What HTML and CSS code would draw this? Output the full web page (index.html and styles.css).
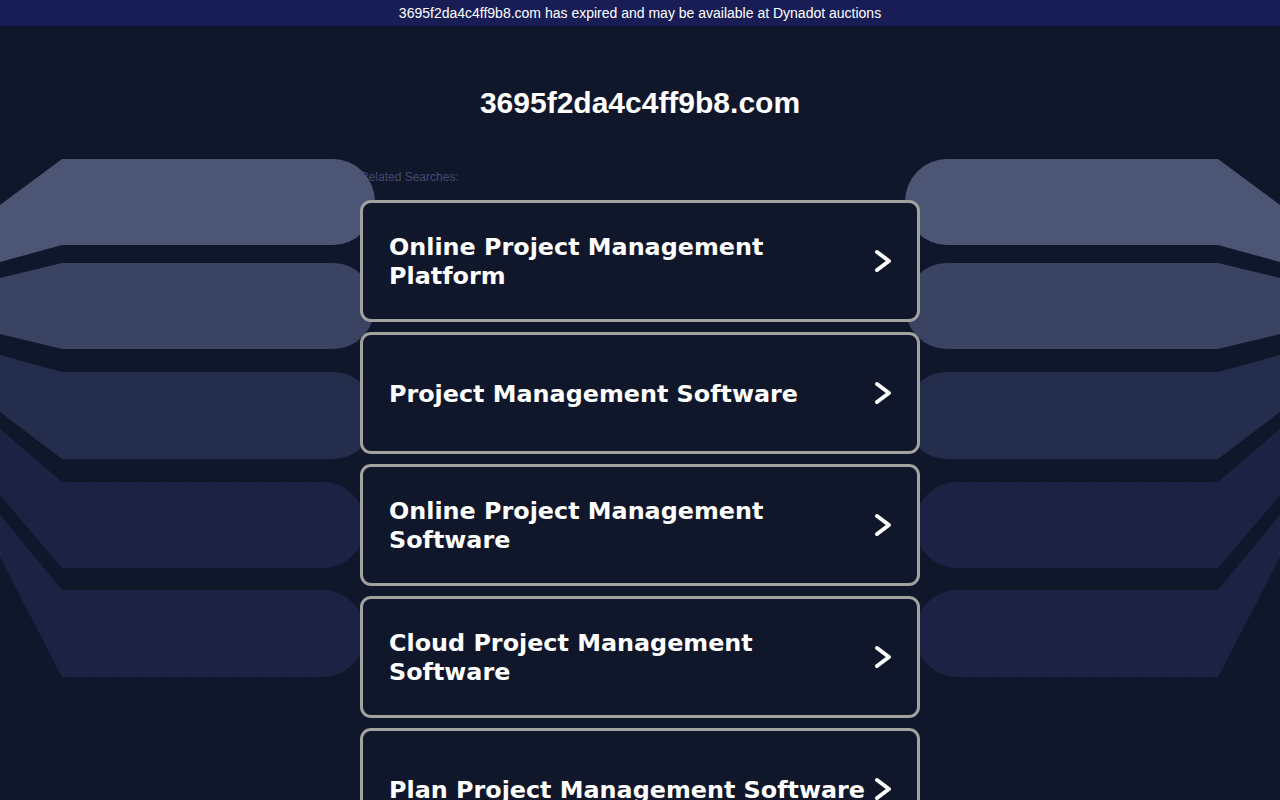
FILE: index.html
```html
<!DOCTYPE html>
<html lang="en">
<head>
<meta charset="utf-8">
<title>3695f2da4c4ff9b8.com</title>
<link rel="stylesheet" href="styles.css">
</head>
<body>
<div class="banner">3695f2da4c4ff9b8.com has expired and may be available at Dynadot auctions</div>
<svg class="deco" viewBox="0 0 1280 800" width="1280" height="800" aria-hidden="true">
  <defs>
    <pattern id="dots" width="3" height="3" patternUnits="userSpaceOnUse">
      <rect width="3" height="3" fill="#1b2243"/>
      <rect width="1" height="1" fill="#1f2647"/>
    </pattern>
    <g id="side">
      <path d="M62,159 L333,159 A42,43 0 0 1 333,245 L62,245 L0,262 L0,205 Z" fill="#4c5674"/>
      <path d="M62,263 L333,263 A42,43 0 0 1 333,349 L62,349 L0,334 L0,278 Z" fill="#3a4362"/>
      <path d="M62,372 L333,372 A42,43.5 0 0 1 333,459 L62,459 L0,412 L0,355 Z" fill="#252d4c"/>
      <path d="M62,482 L323,482 A42,43 0 0 1 323,568 L62,568 L0,495 L0,429 Z" fill="url(#dots)"/>
      <path d="M62,590 L323,590 A42,43.5 0 0 1 323,677 L62,677 L0,557 L0,515 Z" fill="url(#dots)"/>
    </g>
  </defs>
  <use href="#side"/>
  <use href="#side" transform="translate(1280,0) scale(-1,1)"/>
</svg>
<main class="page">
  <h1 class="domain">3695f2da4c4ff9b8.com</h1>
  <section class="related">
    <div class="label">Related Searches:</div>
    <ul class="cards">
      <li class="card"><span class="card-text">Online Project Management Platform</span><svg class="chev" viewBox="0 0 20 26"><path d="M5,4 L17,13 L5,22"/></svg></li>
      <li class="card"><span class="card-text">Project Management Software</span><svg class="chev" viewBox="0 0 20 26"><path d="M5,4 L17,13 L5,22"/></svg></li>
      <li class="card"><span class="card-text">Online Project Management Software</span><svg class="chev" viewBox="0 0 20 26"><path d="M5,4 L17,13 L5,22"/></svg></li>
      <li class="card"><span class="card-text">Cloud Project Management Software</span><svg class="chev" viewBox="0 0 20 26"><path d="M5,4 L17,13 L5,22"/></svg></li>
      <li class="card"><span class="card-text">Plan Project Management Software</span><svg class="chev" viewBox="0 0 20 26"><path d="M5,4 L17,13 L5,22"/></svg></li>
    </ul>
  </section>
</main>
</body>
</html>
```
FILE: styles.css
```css
html, body {
  margin: 0;
  padding: 0;
}
body {
  background: #11172a;
  color: #ffffff;
  font-family: "Liberation Sans", Arial, sans-serif;
  width: 1280px;
  height: 800px;
  overflow: hidden;
  position: relative;
}
.banner {
  height: 26px;
  line-height: 26px;
  background: #181d55;
  color: #ffffff;
  font-size: 14px;
  text-align: center;
}
.deco {
  position: absolute;
  top: 0;
  left: 0;
  display: block;
}
.page {
  display: flex;
  flex-direction: column;
  align-items: center;
}
.domain {
  margin: 60px 0 0;
  font-size: 30px;
  line-height: 34px;
  font-weight: 700;
  color: #ffffff;
}
.related {
  width: 560px;
  margin-top: 50px;
}
.label {
  font-size: 12px;
  line-height: 14px;
  color: #404a6e;
  margin-bottom: 16px;
}
.cards {
  list-style: none;
  margin: 0;
  padding: 0;
  display: flex;
  flex-direction: column;
  gap: 10px;
}
.card {
  position: relative;
  box-sizing: border-box;
  height: 122px;
  border: 3px solid #a2a2a2;
  border-radius: 11px;
  background: #11172a;
  display: flex;
  align-items: center;
  padding: 0 25px 0 26px;
}
.card-text {
  flex: 1;
  font-family: "DejaVu Sans", Verdana, sans-serif;
  font-weight: 700;
  font-size: 23.85px;
  line-height: 29px;
  color: #ffffff;
  padding-top: 2px;
}
.chev {
  width: 20px;
  height: 26px;
  flex: none;
}
.chev path {
  fill: none;
  stroke: #ffffff;
  stroke-width: 4;
  stroke-linecap: round;
  stroke-linejoin: round;
}
```
